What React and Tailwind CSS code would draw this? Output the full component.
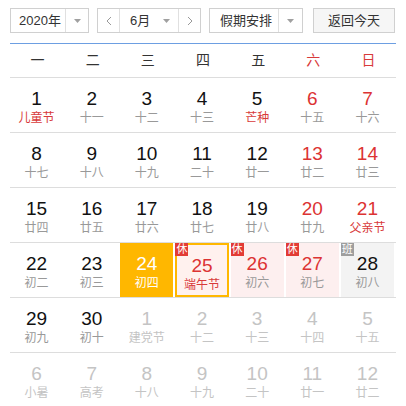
import React from 'react';

const weekDays = ['一', '二', '三', '四', '五', '六', '日'];

// t: number, l: lunar, red: red number, lr: red lunar, out: other month, kind: special cell
const rows = [
  [
    { t: 1, l: '儿童节', lr: true },
    { t: 2, l: '十一' },
    { t: 3, l: '十二' },
    { t: 4, l: '十三' },
    { t: 5, l: '芒种', lr: true },
    { t: 6, l: '十五', red: true },
    { t: 7, l: '十六', red: true },
  ],
  [
    { t: 8, l: '十七' },
    { t: 9, l: '十八' },
    { t: 10, l: '十九' },
    { t: 11, l: '二十' },
    { t: 12, l: '廿一' },
    { t: 13, l: '廿二', red: true },
    { t: 14, l: '廿三', red: true },
  ],
  [
    { t: 15, l: '廿四' },
    { t: 16, l: '廿五' },
    { t: 17, l: '廿六' },
    { t: 18, l: '廿七' },
    { t: 19, l: '廿八' },
    { t: 20, l: '廿九', red: true },
    { t: 21, l: '父亲节', red: true, lr: true },
  ],
  [
    { t: 22, l: '初二' },
    { t: 23, l: '初三' },
    { t: 24, l: '初四', kind: 'selected' },
    { t: 25, l: '端午节', red: true, lr: true, kind: 'today', badge: '休' },
    { t: 26, l: '初六', red: true, kind: 'rest', badge: '休' },
    { t: 27, l: '初七', red: true, kind: 'rest', badge: '休' },
    { t: 28, l: '初八', kind: 'work', badge: '班' },
  ],
  [
    { t: 29, l: '初九' },
    { t: 30, l: '初十' },
    { t: 1, l: '建党节', out: true },
    { t: 2, l: '十二', out: true },
    { t: 3, l: '十三', out: true },
    { t: 4, l: '十四', out: true },
    { t: 5, l: '十五', out: true },
  ],
  [
    { t: 6, l: '小暑', out: true },
    { t: 7, l: '高考', out: true },
    { t: 8, l: '十八', out: true },
    { t: 9, l: '十九', out: true },
    { t: 10, l: '二十', out: true },
    { t: 11, l: '廿一', out: true },
    { t: 12, l: '廿二', out: true },
  ],
];

const Caret = () => (
  <svg width="7" height="4" viewBox="0 0 7 4">
    <path d="M0 0h7L3.5 4z" fill="#a0a0a0" />
  </svg>
);

const Chevron = ({ dir }) => (
  <svg width="6" height="10" viewBox="0 0 6 10">
    <path
      d={dir === 'left' ? 'M5 1L1 5l4 4' : 'M1 1l4 4-4 4'}
      fill="none"
      stroke="#999"
      strokeWidth="1"
    />
  </svg>
);

const DayCell = ({ d }) => {
  let box = 'h-full mr-[2px] relative flex flex-col items-center pt-[10px]';
  if (d.kind === 'selected') box += ' bg-[#ffb700]';
  if (d.kind === 'today') box += ' bg-[#fff1ee] border-2 border-[#ffb700] pt-[8px]';
  if (d.kind === 'rest') box += ' bg-[#fdefef]';
  if (d.kind === 'work') box += ' bg-[#f3f3f3] mr-0';

  let numColor = 'text-[#111]';
  if (d.red) numColor = 'text-[#dc3333]';
  if (d.out) numColor = 'text-[#c4c4c4]';
  if (d.kind === 'selected') numColor = 'text-white';

  let lunarColor = 'text-[#999]';
  if (d.lr) lunarColor = 'text-[#d83a3a]';
  if (d.out) lunarColor = 'text-[#c4c4c4]';
  if (d.kind === 'selected') lunarColor = 'text-white';

  return (
    <div className="h-full">
      <div className={box}>
        {d.badge && (
          <span
            className={`absolute ${d.kind === 'today' ? '-top-[2px] -left-[2px]' : 'top-0 left-0'} w-[13px] h-[13px] text-[11px] leading-[13px] text-center text-white ${
              d.badge === '班' ? 'bg-[#9e9e9e]' : 'bg-[#e23b35]'
            }`}
          >
            {d.badge}
          </span>
        )}
        <span className={`text-[19px] leading-[22px] ${numColor}`}>{d.t}</span>
        <span className={`text-[12px] leading-[16px] ${lunarColor}`}>{d.l}</span>
      </div>
    </div>
  );
};

const App = () => {
  return (
    <div
      className="w-[406px] h-[406px] bg-white overflow-hidden px-[10px] pt-[8px]"
      style={{ fontFamily: '"Liberation Sans", "Noto Sans CJK SC", sans-serif' }}
    >
      <div className="flex items-center h-[25px] text-[13px] text-[#333]">
        <div className="flex w-[79px] h-full border border-[#d0d0d0] bg-white">
          <div className="flex-1 flex items-center pl-[8px]">2020年</div>
          <div className="w-[23px] flex items-center justify-center border-l border-[#e0e0e0]">
            <Caret />
          </div>
        </div>
        <div className="flex w-[104px] h-full ml-[8px] border border-[#d0d0d0] bg-white">
          <div className="w-[22px] flex items-center justify-center border-r border-[#e0e0e0]">
            <Chevron dir="left" />
          </div>
          <div className="flex-1 flex items-center pl-[10px] pr-[8px] justify-between">
            <span>6月</span>
            <Caret />
          </div>
          <div className="w-[22px] flex items-center justify-center border-l border-[#e0e0e0]">
            <Chevron dir="right" />
          </div>
        </div>
        <div className="flex w-[94px] h-full ml-[8px] border border-[#d0d0d0] bg-white">
          <div className="flex-1 flex items-center pl-[10px]">假期安排</div>
          <div className="w-[24px] flex items-center justify-center border-l border-[#e0e0e0]">
            <Caret />
          </div>
        </div>
        <div className="flex w-[82px] h-full ml-[10px] items-center justify-center border border-[#d0d0d0] bg-[#f6f6f6]">
          返回今天
        </div>
      </div>

      <div className="mt-[10px] border-t border-[#6d9fe2]">
        <div className="grid grid-cols-7 h-[34px] border-b border-[#ddd] items-center text-[14px]">
          {weekDays.map((w, i) => (
            <div key={w} className={`text-center ${i >= 5 ? 'text-[#d83a3a]' : 'text-[#333]'}`}>
              {w}
            </div>
          ))}
        </div>
        {rows.map((row, ri) => (
          <div
            key={ri}
            className={`grid grid-cols-7 h-[55px] ${ri < rows.length - 1 ? 'border-b border-[#ddd]' : ''}`}
          >
            {row.map((d, ci) => (
              <DayCell key={ci} d={d} />
            ))}
          </div>
        ))}
      </div>
    </div>
  );
};

export default App;
